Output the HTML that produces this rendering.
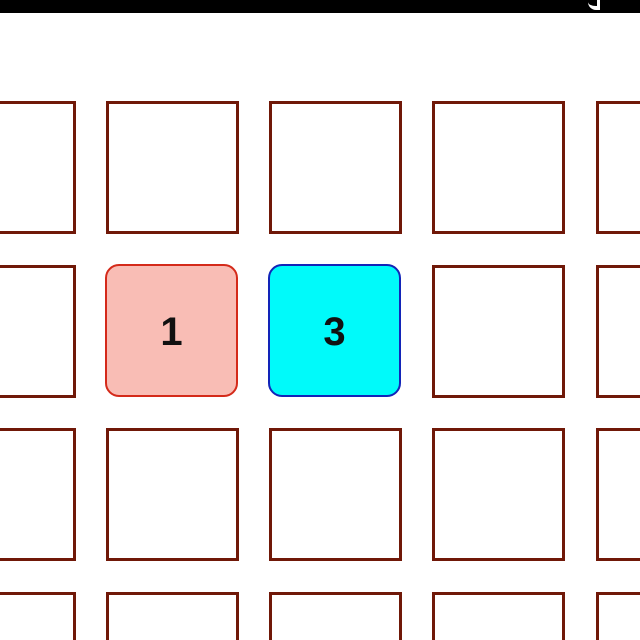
<!DOCTYPE html>
<html><head><style>
html,body{margin:0;padding:0;width:640px;height:640px;overflow:hidden;background:#fff;position:relative;font-family:"Liberation Sans",sans-serif}
.bar{position:absolute;left:0;top:0;width:640px;height:13px;background:#000}
.c{position:absolute;width:127px;height:127px;border:3px solid #701808;box-sizing:content-box}
.t{position:absolute;width:129px;height:125px;border-radius:14px;display:flex;align-items:center;justify-content:center;font-weight:bold;font-size:40px;color:#111;padding-top:4px;box-sizing:content-box}
</style></head><body>
<div class="bar"></div>
<div style="position:absolute;left:588px;top:0;width:12px;height:10px;border-bottom-left-radius:8px;border-bottom:4px solid #fff;border-right:3px solid #fff;box-sizing:border-box"></div>
<div class="c" style="left:-57px;top:101px"></div>
<div class="c" style="left:106px;top:101px"></div>
<div class="c" style="left:269px;top:101px"></div>
<div class="c" style="left:432px;top:101px"></div>
<div class="c" style="left:596px;top:101px"></div>
<div class="c" style="left:-57px;top:265px"></div>
<div class="c" style="left:432px;top:265px"></div>
<div class="c" style="left:596px;top:265px"></div>
<div class="c" style="left:-57px;top:428px"></div>
<div class="c" style="left:106px;top:428px"></div>
<div class="c" style="left:269px;top:428px"></div>
<div class="c" style="left:432px;top:428px"></div>
<div class="c" style="left:596px;top:428px"></div>
<div class="c" style="left:-57px;top:592px"></div>
<div class="c" style="left:106px;top:592px"></div>
<div class="c" style="left:269px;top:592px"></div>
<div class="c" style="left:432px;top:592px"></div>
<div class="c" style="left:596px;top:592px"></div>
<div class="t" style="left:105px;top:264px;background:#f9bdb5;border:2px solid #d42a1a">1</div>
<div class="t" style="left:268px;top:264px;background:#00fafa;border:2px solid #1224b8">3</div>
</body></html>
